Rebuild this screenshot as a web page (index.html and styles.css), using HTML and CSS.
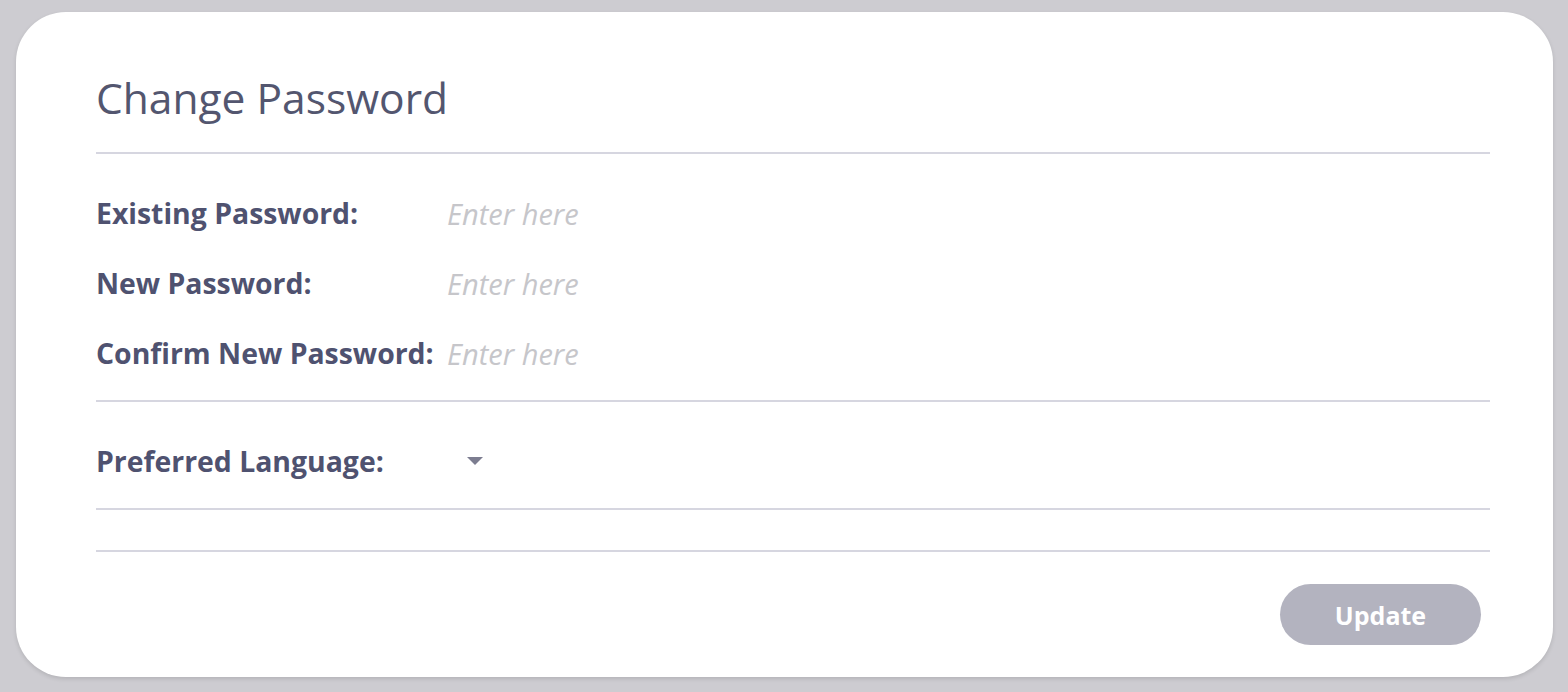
FILE: index.html
```html
<!DOCTYPE html>
<html lang="en">

<head>
    <meta charset="UTF-8" />
    <meta name="viewport" content="width=device-width, initial-scale=1.0" />
    <title>Change Password</title>
    <link rel="stylesheet" href="styles.css">
</head>

<body>
    <div class="card">
        <div class="card-header">
            <h1>Change Password</h1>
        </div>

        <form id="password-form">
            <div class="section">
                <div class="row">
                    <label for="existing">Existing Password:</label>
                    <input type="password" id="existing" name="existing" placeholder="Enter here" />
                </div>
                <div class="row">
                    <label for="newPassword">New Password:</label>
                    <input type="password" id="newPassword" name="newPassword" placeholder="Enter here" />
                </div>
                <div class="row">
                    <label for="confirmPassword">Confirm New Password:</label>
                    <input type="password" id="confirmPassword" name="confirmPassword" placeholder="Enter here" />
                </div>
            </div>

            <div class="section">
                <div class="row">
                    <label for="language">Preferred Language:</label>
                    <div class="select" id="language">
                        <span class="caret"></span>
                    </div>
                </div>
            </div>

            <div class="section empty"></div>

            <div class="actions">
                <button type="submit" disabled>Update</button>
            </div>
        </form>
    </div>
</body>

</html>
```

FILE: styles.css
```css
body {
    margin: 0;
    padding: 12px 15px 14px 16px;
    background: #cdccd1;
    font-family: "Source Sans Pro", "Open Sans", sans-serif;
    color: #515470;
}

.card {
    height: 665px;
    box-sizing: border-box;
    background: #fff;
    border-radius: 50px;
    padding: 0 63px 0 80px;
    box-shadow: 0 2px 4px rgba(0, 0, 0, 0.12);
}

.card-header {
    padding: 62px 0 30px;
    border-bottom: 2px solid #d6d6e0;
}

.card-header h1 {
    margin: 0;
    font-size: 42.5px;
    line-height: 48px;
    font-weight: 400;
    color: #53566f;
}

.section {
    padding: 24px 0 12px;
    border-bottom: 2px solid #d6d6e0;
}

.section.empty {
    padding: 0;
    height: 40px;
}

.row {
    display: flex;
    align-items: center;
    height: 70px;
}

.row label {
    width: 351px;
    flex-shrink: 0;
    font-size: 28.4px;
    font-weight: 700;
    color: #4f5270;
}

.row input {
    border: none;
    outline: none;
    padding: 0;
    font-family: inherit;
    font-size: 29px;
    font-style: italic;
    color: #515470;
    width: 300px;
}

.row input::placeholder {
    color: #c6c6ca;
}

.select {
    width: 36px;
    height: 30px;
    display: flex;
    align-items: center;
    justify-content: flex-end;
}

.caret {
    width: 0;
    height: 0;
    border-left: 8px solid transparent;
    border-right: 8px solid transparent;
    border-top: 8px solid #7c7d90;
}

.actions {
    display: flex;
    justify-content: flex-end;
    padding: 32px 9px 0 0;
}

.actions button {
    width: 201px;
    height: 61px;
    border: none;
    border-radius: 31px;
    background: #b3b3bf;
    color: #fff;
    font-family: inherit;
    font-size: 25px;
    font-weight: 700;
}
```
